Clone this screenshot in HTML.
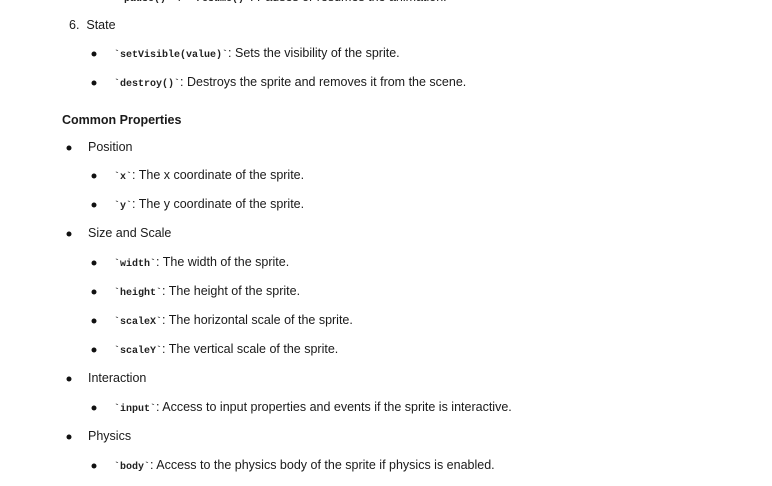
<!DOCTYPE html>
<html><head><meta charset="utf-8"><style>
html,body{margin:0;padding:0;background:#fff;width:772px;height:486px;overflow:hidden}
body{position:relative;font-family:"Liberation Sans",sans-serif;font-size:12.5px;color:#1a1a1a}
.l{position:absolute;white-space:nowrap;line-height:16px;transform:translateY(-8px)}
code{font-family:"Liberation Mono",monospace;font-size:10px;font-weight:bold;color:#222}
.d{position:absolute;width:5px;height:5px;border-radius:50%;background:#111;transform:translate(-2.5px,-2.5px)}
b{font-weight:bold}
</style></head><body>
<div class="l" style="left:118px;top:-3px"><code>`pause()` / `resume()`</code>: Pauses or resumes the animation.</div>
<div class="l" style="left:69px;top:25px">6.&nbsp; State</div>
<div class="d" style="left:94px;top:54px"></div><div class="l" style="left:114px;top:53px"><code>`setVisible(value)`</code>: Sets the visibility of the sprite.</div>
<div class="d" style="left:94px;top:83px"></div><div class="l" style="left:114px;top:82px"><code>`destroy()`</code>: Destroys the sprite and removes it from the scene.</div>
<div class="l" style="left:62px;top:120px"><b>Common Properties</b></div>
<div class="d" style="left:69px;top:148px"></div><div class="l" style="left:88px;top:147px">Position</div>
<div class="d" style="left:94px;top:176px"></div><div class="l" style="left:114px;top:175px"><code>`x`</code>: The x coordinate of the sprite.</div>
<div class="d" style="left:94px;top:205px"></div><div class="l" style="left:114px;top:204px"><code>`y`</code>: The y coordinate of the sprite.</div>
<div class="d" style="left:69px;top:234px"></div><div class="l" style="left:88px;top:233px">Size and Scale</div>
<div class="d" style="left:94px;top:263px"></div><div class="l" style="left:114px;top:262px"><code>`width`</code>: The width of the sprite.</div>
<div class="d" style="left:94px;top:292px"></div><div class="l" style="left:114px;top:291px"><code>`height`</code>: The height of the sprite.</div>
<div class="d" style="left:94px;top:321px"></div><div class="l" style="left:114px;top:320px"><code>`scaleX`</code>: The horizontal scale of the sprite.</div>
<div class="d" style="left:94px;top:350px"></div><div class="l" style="left:114px;top:349px"><code>`scaleY`</code>: The vertical scale of the sprite.</div>
<div class="d" style="left:69px;top:379px"></div><div class="l" style="left:88px;top:378px">Interaction</div>
<div class="d" style="left:94px;top:408px"></div><div class="l" style="left:114px;top:407px"><code>`input`</code>: Access to input properties and events if the sprite is interactive.</div>
<div class="d" style="left:69px;top:437px"></div><div class="l" style="left:88px;top:436px">Physics</div>
<div class="d" style="left:94px;top:466px"></div><div class="l" style="left:114px;top:465px"><code>`body`</code>: Access to the physics body of the sprite if physics is enabled.</div>
</body></html>
